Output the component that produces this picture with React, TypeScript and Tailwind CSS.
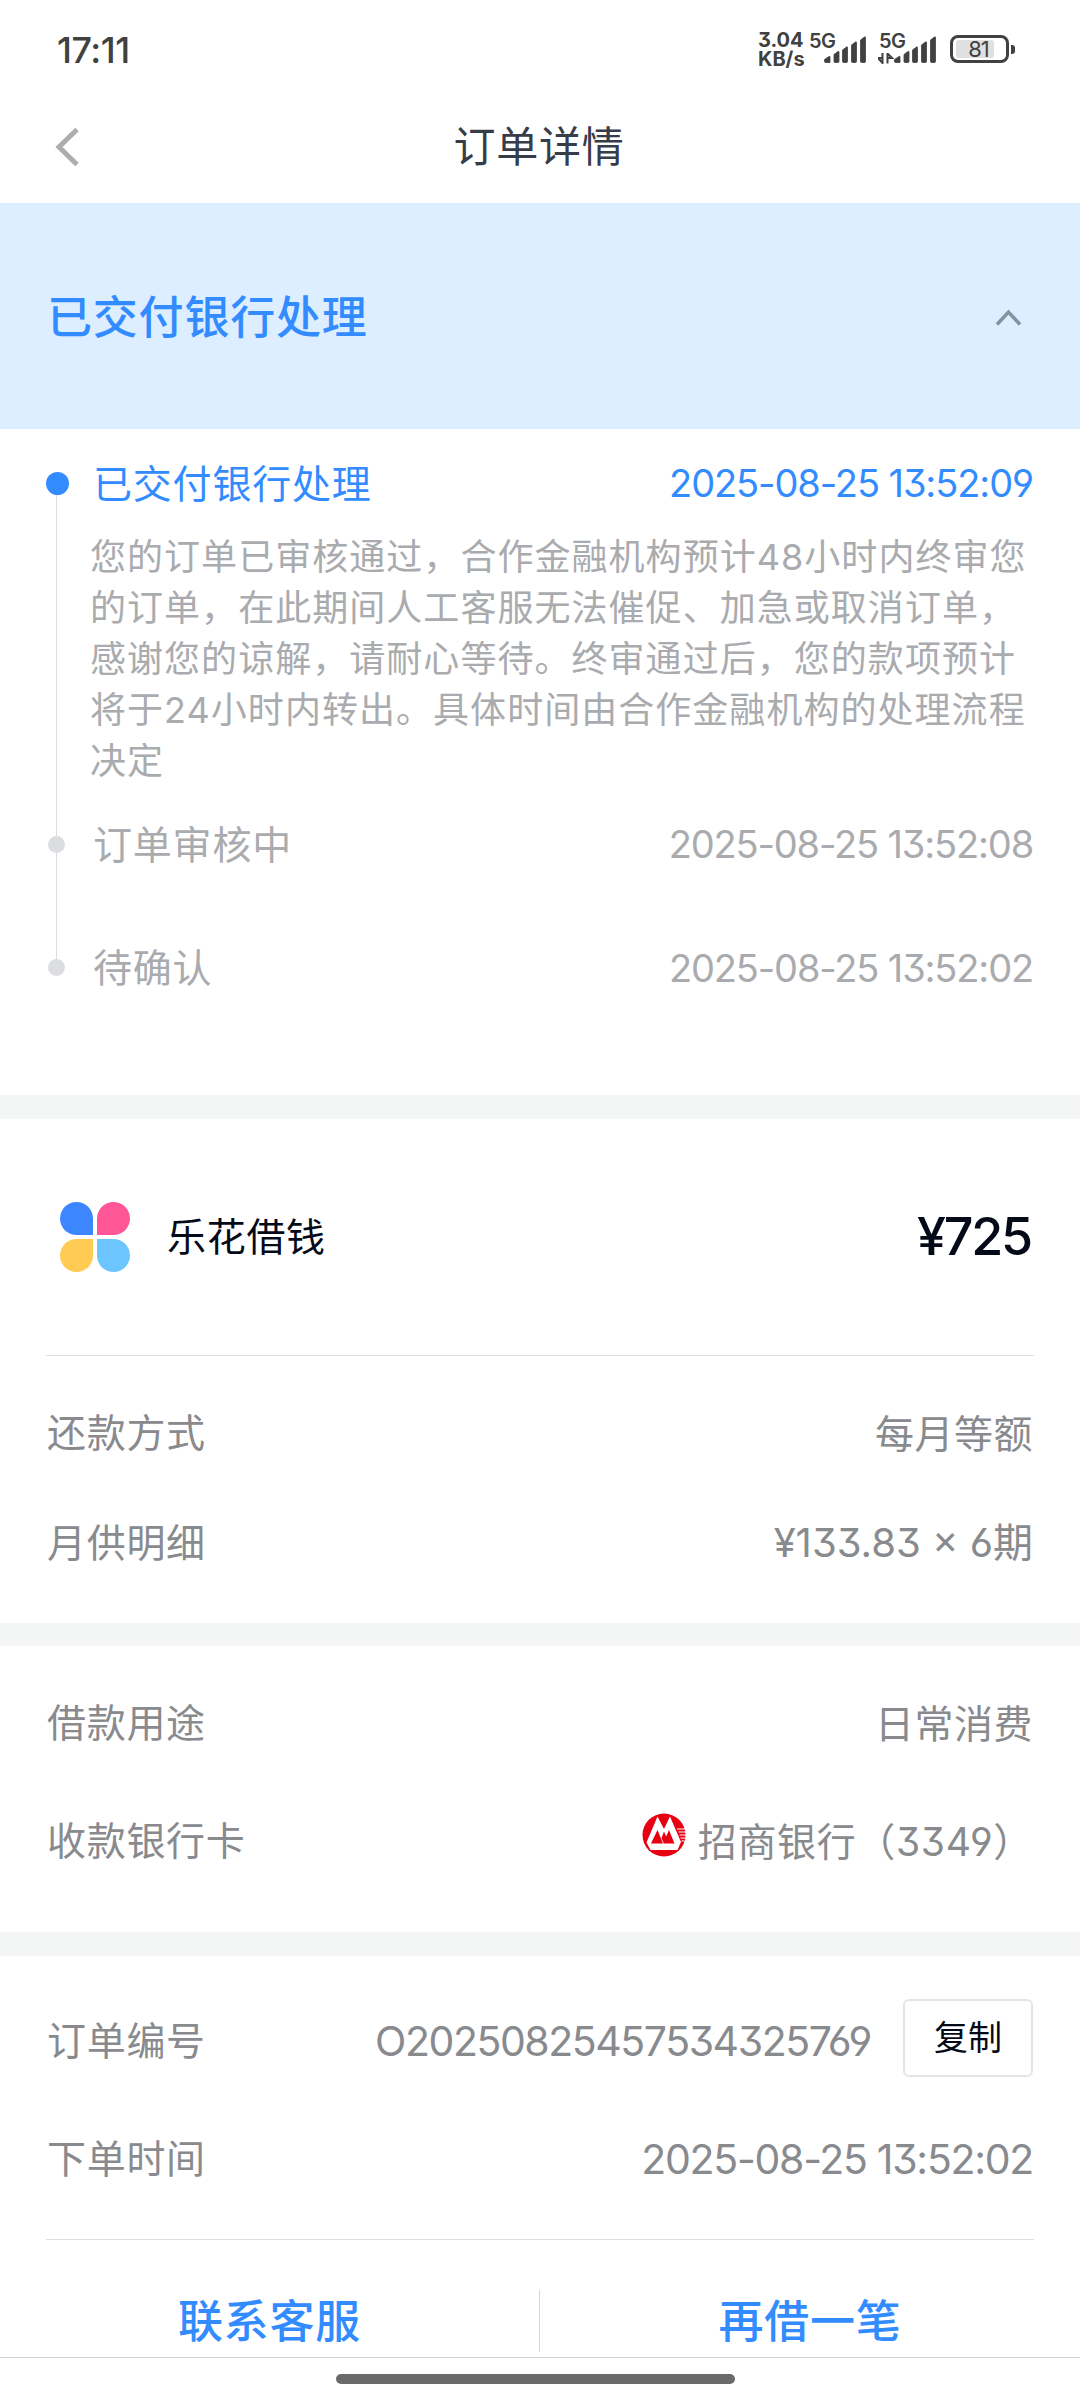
import type { ReactNode } from "react";

const timeline = [
  { title: "订单审核中", time: "2025-08-25 13:52:08", height: "h-[116px]" },
  { title: "待确认", time: "2025-08-25 13:52:02", height: "h-[131px]" },
];

const notice = [
  "您的订单已审核通过，合作金融机构预计48小时内终审您",
  "的订单，在此期间人工客服无法催促、加急或取消订单，",
  "感谢您的谅解，请耐心等待。终审通过后，您的款项预计",
  "将于24小时内转出。具体时间由合作金融机构的处理流程",
  "决定",
];

function SignalBars() {
  return (
    <svg
      width="43"
      height="28"
      viewBox="0 0 43 28"
      fill="#414141"
      stroke="#414141"
      strokeWidth="0.8"
      strokeLinejoin="round"
    >
      <path d="M0.500 23.500 5 20.500Q6 20 6 21V26.500H1.500Q0.500 26.500 0.500 25.500Z" />
      <path d="M10 18.500 14 15.500Q15 15 15 16V25.500Q15 26.500 14 26.500H11Q10 26.500 10 25.500Z" />
      <path d="M18.500 14 22.500 11Q23.500 10.500 23.500 11.500V25.500Q23.500 26.500 22.500 26.500H19.500Q18.500 26.500 18.500 25.500Z" />
      <path d="M27.500 9 31.500 6Q32.500 5.500 32.500 6.500V25.500Q32.500 26.500 31.500 26.500H28.500Q27.500 26.500 27.500 25.500Z" />
      <path d="M36.500 4 40.500 1Q41.500 0.500 41.500 1.500V25.500Q41.500 26.500 40.500 26.500H37.500Q36.500 26.500 36.500 25.500Z" />
    </svg>
  );
}

function StatusBar() {
  return (
    <div className="relative h-[90px] shrink-0 text-[#414141]">
      <span className="absolute left-[57px] top-[32px] text-[36px] font-medium tracking-[-0.500px]">
        17:11
      </span>
      <div className="absolute left-[758px] top-[31px] flex flex-col text-[20px] leading-[19px] font-bold">
        <span>3.04</span>
        <span>KB/s</span>
      </div>
      <span className="absolute left-[809px] top-[31px] text-[20px] font-semibold tracking-[-0.700px]">5G</span>
      <div className="absolute left-[824px] top-[36px]">
        <SignalBars />
      </div>
      <span className="absolute left-[879px] top-[31px] text-[20px] font-semibold tracking-[-0.700px]">5G</span>
      <svg className="absolute left-[878px] top-[53px]" width="16" height="11" viewBox="0 0 16 11">
        <path d="M4.500 0V10L0 5H4M9.500 10.500V0.500L14 5H10" fill="none" stroke="#414141" strokeWidth="2" />
      </svg>
      <div className="absolute left-[894px] top-[36px]">
        <SignalBars />
      </div>
      <div className="absolute left-[950px] top-[35px] flex h-[28px] w-[59px] items-center justify-center rounded-[8px] border-[3px] border-[#414141]">
        <div className="absolute left-[3px] top-[2px] h-[18px] w-[38px] rounded-[3px] bg-[#e0e0e0]" />
        <span className="relative -left-px text-[22px] tracking-[-1px]">81</span>
      </div>
      <div className="absolute left-[1011px] top-[45px] h-[9px] w-[4px] rounded-r-[3px] bg-[#414141]" />
    </div>
  );
}

function Row({ label, height, children }: { label: string; height: string; children: ReactNode }) {
  return (
    <div className={`flex items-center justify-between ${height}`}>
      <span className="relative -top-px tracking-[0.700px]">{label}</span>
      {children}
    </div>
  );
}

function PetalLogo() {
  return (
    <div className="grid grid-cols-2 gap-1">
      <div className="size-[33px] rounded-full rounded-br-[5px] bg-[#3c86ff]" />
      <div className="size-[33px] rounded-full rounded-bl-[5px] bg-[#ff5698]" />
      <div className="size-[33px] rounded-full rounded-tr-[5px] bg-[#ffcb53]" />
      <div className="size-[33px] rounded-full rounded-tl-[5px] bg-[#6dc5ff]" />
    </div>
  );
}

function BankLogo() {
  return (
    <svg width="44" height="44" viewBox="0 0 44 44">
      <circle cx="22" cy="22" r="21.500" fill="#e60012" />
      <path d="M15.500 3.500 22 16 28 3.500 39 29 35.500 37H8.500L4.500 29.500Z" fill="#fff" />
      <path d="M15.500 17 21 30.500H9ZM27 17 32.500 30.500H21.800L19.500 25 22 18.500 24.200 23.500Z" fill="#e60012" />
      <path d="M35 16H43M36.500 19H44M37.500 22H44M38.500 25H43.500M39.500 28H42.500" stroke="#fff" strokeWidth="1.2" />
    </svg>
  );
}

export default function App() {
  return (
    <main className="flex h-[2400px] w-[1080px] flex-col overflow-hidden bg-white font-['Inter','Noto_Sans_CJK_SC',sans-serif] [font-feature-settings:'cv03','cv04','cv09'] leading-none text-[#888a8e]">
      <StatusBar />

      {/* ===== HEADER ===== */}
      <header className="relative flex h-[113px] shrink-0 items-center justify-center pr-0.5 text-[#373c49]">
        <svg className="absolute left-[54px] top-[37px]" width="26" height="40" viewBox="0 0 26 40">
          <path d="M23 2.500 5 20 23 37.500" fill="none" stroke="#adadaf" strokeWidth="5" />
        </svg>
        <h1 className="text-[42px] tracking-[0.800px]">订单详情</h1>
      </header>

      {/* ===== STATUS ===== */}
      <section className="flex h-[226px] shrink-0 items-center justify-between bg-[#dceeff] pl-[47px] pr-[58px] pt-0.5">
        <h2 className="text-[45px] font-medium tracking-[0.800px] text-[#338cff]">已交付银行处理</h2>
        <svg width="27" height="17" viewBox="0 0 27 17">
          <path d="M2 15.500 13.500 3 25 15.500" fill="none" stroke="#87939f" strokeWidth="3.500" />
        </svg>
      </section>

      {/* ===== TIMELINE ===== */}
      <section className="relative h-[666px] shrink-0 pl-[45px] pr-[47px] pt-1.5 text-[39px] text-[#a9abae]">
        <div className="absolute left-[56px] top-[54px] h-[484px] w-px bg-[#dcdde0]" />
        <div className="relative flex h-24 items-center text-[#338cff]">
          <div className="ml-px size-[23px] rounded-full bg-[#338cff]" />
          <span className="ml-6 tracking-[0.800px]">已交付银行处理</span>
          <span className="ml-auto text-[38px] tracking-[-1.100px]">2025-08-25 13:52:09</span>
        </div>
        <div className="relative top-px ml-[45px] whitespace-nowrap text-[36px] leading-[51px] tracking-[1.040px]">
          {notice.map((line) => (
            <p key={line}>{line}</p>
          ))}
        </div>
        {timeline.map((step) => (
          <div key={step.title} className={`relative flex items-center ${step.height}`}>
            <div className="ml-[3px] size-[17px] rounded-full bg-[#dcdde0]" />
            <span className="ml-7 tracking-[0.800px]">{step.title}</span>
            <span className="ml-auto text-[38px] tracking-[-1.150px]">{step.time}</span>
          </div>
        ))}
      </section>

      <div className="h-6 shrink-0 bg-[#f4f6f6]" />

      {/* ===== LOAN ===== */}
      <section className="h-[504px] shrink-0 px-[47px] text-[39px]">
        <div className="flex h-[236px] items-center pl-[13px] text-[#050a18]">
          <PetalLogo />
          <span className="relative -top-px ml-[37px] tracking-[0.700px]">乐花借钱</span>
          <span className="ml-auto pr-0.5 text-[52px] font-[450] tracking-[-2.200px]">¥725</span>
        </div>
        <div className="-mx-px mb-[22px] h-px bg-[#dcdddf]" />
        <Row label="还款方式" height="h-[110px]">
          <span className="tracking-[0.500px]">每月等额</span>
        </Row>
        <Row label="月供明细" height="h-[110px]">
          <span className="text-[40px]">¥133.83 × 6期</span>
        </Row>
      </section>

      <div className="h-[23px] shrink-0 bg-[#f4f6f6]" />

      {/* ===== USAGE ===== */}
      <section className="h-[286px] shrink-0 px-[47px] pt-[18px] text-[39px]">
        <Row label="借款用途" height="h-[118px]">
          <span className="tracking-[0.500px]">日常消费</span>
        </Row>
        <Row label="收款银行卡" height="h-[119px]">
          <div className="flex items-center">
            <div className="mr-3 -mt-3.5">
              <BankLogo />
            </div>
            <span className="tracking-[0.650px]">招商银行（3349）</span>
          </div>
        </Row>
      </section>

      <div className="h-6 shrink-0 bg-[#f4f6f6]" />

      {/* ===== ORDER ===== */}
      <section className="h-[283px] shrink-0 px-[47px] pt-[26px] text-[39px]">
        <Row label="订单编号" height="h-[118px]">
          <div className="flex items-center">
            <span className="text-[41px] tracking-[-1.450px]">O20250825457534325769</span>
            <button className="ml-8 -mt-[7px] h-[78px] w-[130px] rounded-[6px] border-2 border-[#e4e5e8] text-[34px] text-[#050a18]">
              复制
            </button>
          </div>
        </Row>
        <Row label="下单时间" height="h-[118px]">
          <span className="text-[41px] tracking-[-1.300px]">2025-08-25 13:52:02</span>
        </Row>
      </section>

      {/* ===== ACTIONS ===== */}
      <section className="flex h-[119px] shrink-0 flex-col border-b border-[#d0d1d3]">
        <div className="mx-[46px] mb-[50px] h-px shrink-0 bg-[#dcdddf]" />
        <div className="grid h-[62px] grid-cols-2 items-center text-center text-[45px] font-medium tracking-[0.800px] text-[#338cff]">
          <button className="h-full border-r border-[#d6d7da]">联系客服</button>
          <button>再借一笔</button>
        </div>
      </section>

      <div className="ml-[336px] mt-4 h-[10px] w-[399px] shrink-0 rounded-full bg-[#6a6a6a]" />
    </main>
  );
}
